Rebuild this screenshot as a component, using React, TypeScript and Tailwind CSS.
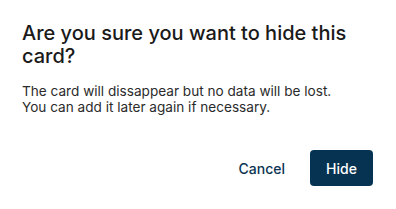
import React from "react";

export default function App() {
  return (
    <div
      className="w-[396px] h-[209px] bg-white flex flex-col px-[22px] pt-[22px]"
      style={{ fontFamily: "Inter, 'Noto Sans', sans-serif" }}
    >
      <h2 className="text-[20px] leading-[23px] font-medium text-[#1a1a1a]">
        Are you sure you want to hide this card?
      </h2>
      <p className="mt-[16px] text-[13.6px] leading-[15.5px] text-[#2b2b2b]">
        The card will dissappear but no data will be lost.
        <br />
        You can add it later again if necessary.
      </p>
      <div className="mt-[35px] flex justify-end items-center gap-[9px] pr-[1px]">
        <button className="h-[36px] px-[16px] rounded-[4px] text-[14px] font-medium text-[#0b3452]">
          Cancel
        </button>
        <button className="h-[36px] w-[63px] rounded-[4px] bg-[#063351] text-[14px] font-medium text-white">
          Hide
        </button>
      </div>
    </div>
  );
}
